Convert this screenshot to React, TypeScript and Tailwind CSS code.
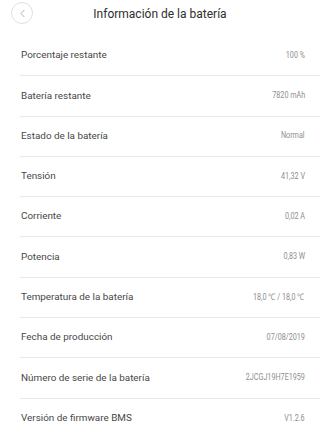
import { ChevronLeft } from "lucide-react";

const rows: [string, string][] = [
  ["Porcentaje restante", "100 %"],
  ["Batería restante", "7820 mAh"],
  ["Estado de la batería", "Normal"],
  ["Tensión", "41,32 V"],
  ["Corriente", "0,02 A"],
  ["Potencia", "0,83 W"],
  ["Temperatura de la batería", "18,0 ℃ / 18,0 ℃"],
  ["Fecha de producción", "07/08/2019"],
  ["Número de serie de la batería", "2JCGJ19H7E1959"],
  ["Versión de firmware BMS", "V1.2.6"],
];

export default function App() {
  return (
    <div className="w-[320px] h-[444px] bg-white overflow-hidden font-['Roboto',sans-serif]">
      <div className="relative h-[36px] flex items-start justify-center">
        <div className="absolute left-[11px] top-[2px] w-[22px] h-[22px] rounded-full border border-[#e0e0e0] flex items-center justify-center">
          <ChevronLeft className="w-[13px] h-[13px] text-[#999999]" strokeWidth={1.4} />
        </div>
        <div className="pt-[6px] text-[12px] leading-[17px] text-[#2e2e2e]">Información de la batería</div>
      </div>
      <div className="pl-[20px]">
        {rows.map(([label, value], i) => (
          <div
            key={label}
            className={`h-[40.3px] flex items-center justify-between pr-[15px] ${
              i < rows.length - 1 ? "border-b border-[#e8e8e8]" : ""
            }`}
          >
            <span className="pl-[1px] text-[9.9px] text-[#474747]">{label}</span>
            <span className="inline-block whitespace-nowrap origin-right scale-x-[0.8] text-[9px] text-[#8e8e8e]">
              {value}
            </span>
          </div>
        ))}
      </div>
    </div>
  );
}
